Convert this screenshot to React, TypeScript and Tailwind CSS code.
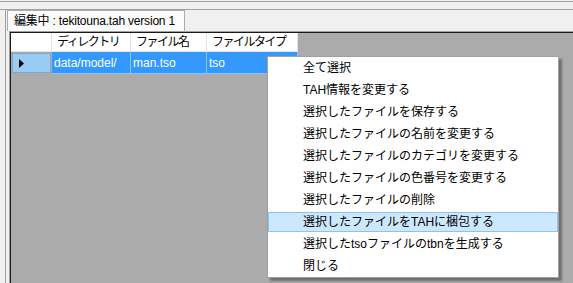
import React from 'react';

const menuItems = [
  '全て選択',
  'TAH情報を変更する',
  '選択したファイルを保存する',
  '選択したファイルの名前を変更する',
  '選択したファイルのカテゴリを変更する',
  '選択したファイルの色番号を変更する',
  '選択したファイルの削除',
  '選択したファイルをTAHに梱包する',
  '選択したtsoファイルのtbnを生成する',
  '閉じる',
];

const HIGHLIGHT = 7;

// grid columns: header label + width
const columns = [
  { label: 'ディレクトリ', width: 'w-[79px]', value: 'data/model/' },
  { label: 'ファイル名', width: 'w-[76px]', value: 'man.tso' },
  { label: 'ファイルタイプ', width: 'w-[91px]', value: 'tso' },
];

export default function App() {
  return (
    <div className="relative w-[573px] h-[283px] overflow-hidden bg-[#f0f0f0] font-['Liberation_Sans','Noto_Sans_CJK_JP',sans-serif] text-[12px] text-black">
      {/* top strip */}
      <div className="mt-px h-[9px] border-y border-[#a0a0a0]" />

      <div className="flex h-[273px]">
        <div className="w-[5px]" />
        <div className="flex-1 flex flex-col border-l border-[#a0a0a0] pl-[3px]">
          {/* tab strip */}
          <div className="h-[21px] flex">
            <div className="-ml-[2px] h-[21px] border border-b-0 border-[#adadad] bg-[#fcfcfc] pl-[6px] pr-[9px] flex items-center leading-none whitespace-nowrap tracking-[-0.2px]">
              編集中 : tekitouna.tah version 1
            </div>
          </div>

          {/* panel */}
          <div className="flex-1 border-l border-t border-[#a0a0a0]">
            <div className="h-full border-l border-t border-[#1a1a1a] bg-[#ababab]">
              {/* header row */}
              <div className="flex h-[19px]">
                <div className="w-[41px] bg-white border-r border-b border-[#e3e3e3]" />
                {columns.map((col) => (
                  <div
                    key={col.label}
                    className={`${col.width} bg-white border-r border-b border-[#e3e3e3] pl-[5px] flex items-center leading-none whitespace-nowrap tracking-[-1.5px]`}
                  >
                    {col.label}
                  </div>
                ))}
              </div>

              {/* data row */}
              <div className="flex h-[22px]">
                <div className="w-[41px] p-px bg-[#ababab]">
                  <div className="h-full border border-[#7aa9d6] bg-[#99ccf3] flex items-center pl-[6px]">
                    <svg width="6" height="9" viewBox="0 0 6 9">
                      <path d="M0 0 L5 4.5 L0 9 Z" fill="#000" />
                    </svg>
                  </div>
                </div>
                {columns.map((col) => (
                  <div
                    key={col.label}
                    className={`${col.width} bg-[#3399ff] border-r border-b border-[#86c2ff] pl-[2px] flex items-center leading-none text-white whitespace-nowrap`}
                  >
                    {col.value}
                  </div>
                ))}
              </div>
            </div>
          </div>
        </div>
      </div>

      {/* context menu */}
      <div className="absolute left-[267px] top-[56px] w-[292px] bg-white border border-[#a0a0a0] shadow-[3px_3px_2px_rgba(0,0,0,0.35)]">
        {menuItems.map((item, i) =>
          i === HIGHLIGHT ? (
            <div key={item} className="h-[22px] py-px">
              <div className="h-[20px] border border-[#8fc3ee] bg-[#cce8ff] pl-[34px] flex items-center leading-none whitespace-nowrap">
                {item}
              </div>
            </div>
          ) : (
            <div key={item} className="h-[22px] pl-[35px] flex items-center leading-none whitespace-nowrap">
              {item}
            </div>
          )
        )}
      </div>
    </div>
  );
}
